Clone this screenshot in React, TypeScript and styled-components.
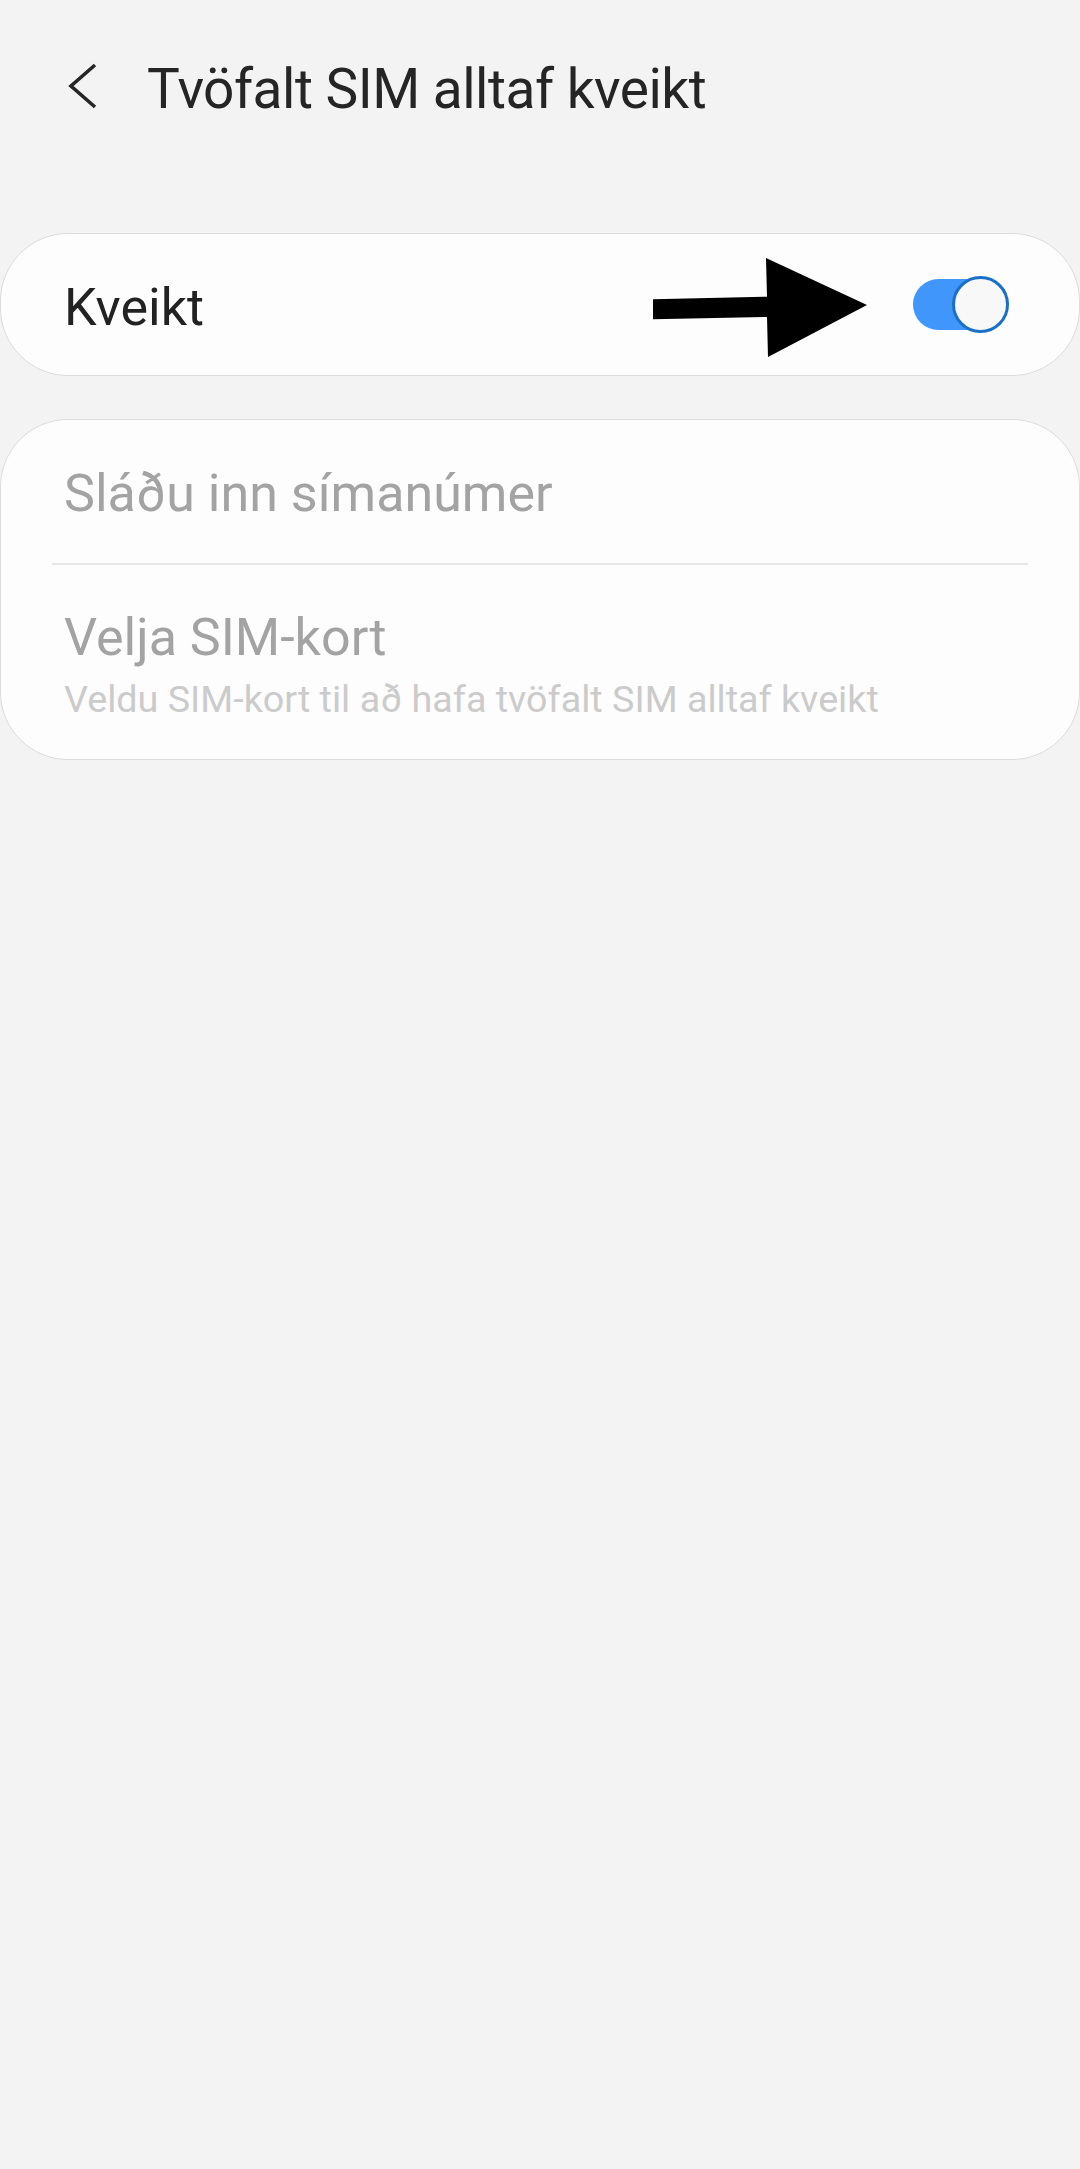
import styled, { createGlobalStyle } from "styled-components";

const GlobalStyle = createGlobalStyle`
  html, body {
    margin: 0;
    padding: 0;
    background-color: #f3f3f3;
    min-height: 100vh;
  }
  body {
    font-family: Roboto, "Noto Sans", "Liberation Sans", sans-serif;
  }
  * {
    box-sizing: border-box;
  }
`;

const Page = styled.div`
  min-height: 100vh;
  background-color: #f3f3f3;
  display: flex;
  flex-direction: column;
`;

const Header = styled.header`
  display: flex;
  align-items: center;
  height: 66px;
  margin-top: 56px;
  margin-bottom: 111px;
  padding-left: 66px;
`;

const BackButton = styled.button`
  width: 34px;
  height: 48px;
  padding: 0;
  border: none;
  background: none;
  display: flex;
  margin-top: -6px;
`;

const Title = styled.h1`
  margin: 0 0 0 47px;
  font-size: 55px;
  line-height: 66px;
  font-weight: 400;
  letter-spacing: -0.5px;
  color: #252525;
`;

const Card = styled.section<{ $gap?: number }>`
  position: relative;
  background-color: #fdfdfd;
  border: 1px solid #dcdcdc;
  border-radius: 68px;
  margin-bottom: ${(p) => p.$gap ?? 0}px;
`;

const SwitchRow = styled.div`
  display: flex;
  align-items: center;
  justify-content: space-between;
  height: 141px;
  padding: 0 70px 0 63px;
`;

const Label = styled.span<{ $muted?: boolean }>`
  font-size: 52px;
  line-height: 60px;
  color: ${(p) => (p.$muted ? "#a3a3a3" : "#222222")};
`;

const SwitchLabel = styled(Label)`
  margin-top: 7px;
`;

const Toggle = styled.div`
  position: relative;
  width: 96px;
  height: 57px;
`;

const Track = styled.div`
  position: absolute;
  left: 0;
  top: 3px;
  width: 84px;
  height: 51px;
  border-radius: 26px;
  background-color: #4096fb;
`;

const Thumb = styled.div`
  position: absolute;
  right: 0;
  top: 0;
  width: 57px;
  height: 57px;
  border-radius: 50%;
  background-color: #f8f8f8;
  border: 3px solid #1a70c6;
`;

const Pointer = styled.svg`
  position: absolute;
  left: 640px;
  top: 20px;
`;

const ListRow = styled.div<{ $top: number; $bottom: number }>`
  display: flex;
  flex-direction: column;
  padding: ${(p) => p.$top}px 63px ${(p) => p.$bottom}px 63px;
`;

const Divider = styled.hr`
  margin: 0 51px;
  border: none;
  height: 2px;
  background-color: #e5e5e5;
`;

const Summary = styled.span`
  margin-top: 8px;
  font-size: 37.7px;
  line-height: 46px;
  color: #cbcbcb;
`;

export default function App() {
  return (
    <Page>
      <GlobalStyle />
      <Header>
        <BackButton aria-label="Til baka">
          <svg width="34" height="48" viewBox="0 0 34 48">
            <polyline
              points="29,3 5,24 29,45"
              fill="none"
              stroke="#262626"
              strokeWidth="3.6"
            />
          </svg>
        </BackButton>
        <Title>Tvöfalt SIM alltaf kveikt</Title>
      </Header>

      <Card $gap={43}>
        <SwitchRow>
          <SwitchLabel>Kveikt</SwitchLabel>
          <Toggle>
            <Track />
            <Thumb />
          </Toggle>
        </SwitchRow>
        <Pointer width="240" height="110" viewBox="0 0 240 110">
          <polygon
            points="12,45.3 126,42.7 125,4 226,51 127,103 126,63 12,65.3"
            fill="#000000"
          />
        </Pointer>
      </Card>

      <Card>
        <ListRow $top={44} $bottom={39}>
          <Label $muted>Sláðu inn símanúmer</Label>
        </ListRow>
        <Divider />
        <ListRow $top={43} $bottom={37}>
          <Label $muted>Velja SIM-kort</Label>
          <Summary>Veldu SIM-kort til að hafa tvöfalt SIM alltaf kveikt</Summary>
        </ListRow>
      </Card>
    </Page>
  );
}
